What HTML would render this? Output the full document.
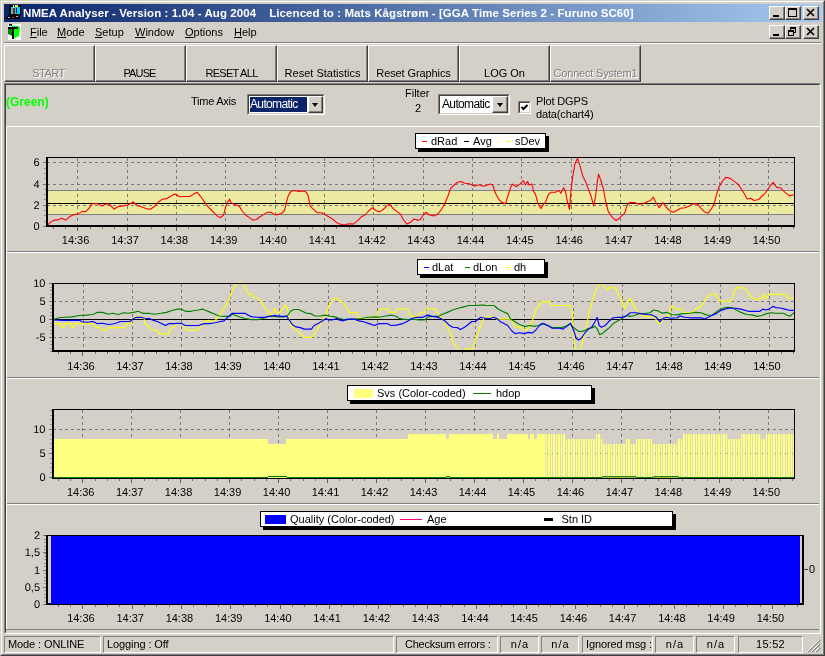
<!DOCTYPE html>
<html><head><meta charset="utf-8">
<style>
*{box-sizing:border-box;margin:0;padding:0}
html,body{width:825px;height:656px;overflow:hidden;background:#d4d0c8;will-change:transform;font-family:"Liberation Sans",sans-serif;font-size:11px;color:#000}
.a{position:absolute}
#win{position:absolute;left:0;top:0;width:825px;height:656px;background:#d4d0c8;border:1px solid;border-color:#d4d0c8 #404040 #404040 #d4d0c8}
#win2{position:absolute;left:1px;top:1px;width:823px;height:654px;border:1px solid;border-color:#fff #808080 #808080 #fff}
#title{position:absolute;left:4px;top:4px;width:818px;height:18px;background:linear-gradient(to right,#0a246a,#a6caf0);color:#fff;font-weight:bold;font-size:11.5px;line-height:18px;white-space:pre;letter-spacing:0.075px}
#title span{position:absolute;left:19px;top:0}
.cb{position:absolute;width:16px;height:14px;background:#d4d0c8;border:1px solid;border-color:#fff #404040 #404040 #fff;box-shadow:inset -1px -1px 0 #808080}
#menu{position:absolute;left:4px;top:22px;width:817px;height:20px;font-size:11px;line-height:20px}
#menu span{position:absolute;top:0}
.btn{position:absolute;top:45px;height:37px;width:91px;background:#d4d0c8;border:1px solid;border-color:#fff #404040 #404040 #fff;box-shadow:inset -1px -1px 0 #808080;text-align:center;font-size:11px;padding-top:21px;line-height:13px}
.dis{color:#808080;text-shadow:1px 1px 0 #fff}
.panel{position:absolute;left:4px;width:816px;border-top:1px solid #fff;border-bottom:1px solid #808080}
.lg{position:absolute;background:#fff;border:1px solid #000;box-shadow:3px 3px 0 #000;font-size:11px;line-height:13px;white-space:pre}
.lg span{position:absolute;top:0}
.tk{position:absolute;font-size:11px;line-height:12px}
.sb{position:absolute;top:636px;height:17px;border:1px solid;border-color:#808080 #fff #fff #808080;font-size:11px;line-height:15px;padding-left:3px;white-space:pre}
svg{position:absolute;left:0;top:0}
</style></head><body>
<div id="win"></div><div id="win2"></div>
<div id="title"><span>NMEA Analyser - Version : 1.04 - Aug 2004    Licenced to : Mats Kågstrøm - [GGA Time Series 2 - Furuno SC60]</span></div>
<div id="menu"><span style="left:26px"><u>F</u>ile</span><span style="left:53px"><u>M</u>ode</span><span style="left:91px"><u>S</u>etup</span><span style="left:131px"><u>W</u>indow</span><span style="left:181px"><u>O</u>ptions</span><span style="left:230px"><u>H</u>elp</span></div>
<svg width="40" height="45" viewBox="0 0 40 45" style="left:0;top:0">
<rect x="9" y="5" width="12" height="10" fill="#000"/><rect x="11" y="7" width="9" height="7" fill="#00e0e0"/><rect x="13" y="8" width="2" height="6" fill="#e00000"/><rect x="16" y="8" width="1" height="5" fill="#0000c0"/><rect x="15" y="5" width="3" height="2" fill="#ffff00"/><rect x="13" y="5" width="1" height="3" fill="#fff"/>
<path d="M9 15 L20 15 L20 19 L6 19 L6 18 Z" fill="#000"/><rect x="8" y="17" width="2" height="1" fill="#c0c0c0"/><rect x="12" y="17" width="2" height="1" fill="#ff0040"/><rect x="16" y="16" width="2" height="1" fill="#c0c0c0"/>
<rect x="8" y="24" width="13" height="16" fill="#fff"/><path d="M8 27 L12 27 L12 36 L8 34 Z" fill="#008000"/><path d="M12 26 L19 26 L20 28 L19 36 L15 38 L12 36 Z" fill="#00ff00"/><rect x="8" y="27" width="10" height="2" fill="#000"/><rect x="12" y="27" width="2" height="12" fill="#000"/><rect x="9" y="24" width="3" height="2" fill="#000"/><rect x="10" y="25" width="1" height="1" fill="#00ff00"/>
</svg>
<div class="cb" style="left:769px;top:6px"><svg width="14" height="12" viewBox="0 0 14 12" style="left:0;top:0"><rect x="3" y="8" width="6" height="2" fill="#000"/></svg></div><div class="cb" style="left:785px;top:6px"><svg width="14" height="12" viewBox="0 0 14 12" style="left:0;top:0"><rect x="2.5" y="1.5" width="8" height="8" fill="none" stroke="#000"/><rect x="2" y="1" width="9" height="2" fill="#000"/></svg></div><div class="cb" style="left:803px;top:6px"><svg width="14" height="12" viewBox="0 0 14 12" style="left:0;top:0"><path d="M3 2 L10 9 M10 2 L3 9" stroke="#000" stroke-width="1.6" fill="none"/></svg></div><div class="cb" style="left:769px;top:25px"><svg width="14" height="12" viewBox="0 0 14 12" style="left:0;top:0"><rect x="3" y="8" width="6" height="2" fill="#000"/></svg></div><div class="cb" style="left:785px;top:25px"><svg width="14" height="12" viewBox="0 0 14 12" style="left:0;top:0"><rect x="4.5" y="1.5" width="5" height="5" fill="none" stroke="#000"/><rect x="4" y="1" width="6" height="2" fill="#000"/><rect x="2.5" y="4.5" width="5" height="5" fill="#d4d0c8" stroke="#000"/><rect x="2" y="4" width="6" height="2" fill="#000"/></svg></div><div class="cb" style="left:803px;top:25px"><svg width="14" height="12" viewBox="0 0 14 12" style="left:0;top:0"><path d="M3 2 L10 9 M10 2 L3 9" stroke="#000" stroke-width="1.6" fill="none"/></svg></div>
<div class="a" style="left:4px;top:42px;width:817px;height:1px;background:#808080"></div><div class="a" style="left:4px;top:43px;width:817px;height:1px;background:#fff"></div>
<div class="btn dis" style="left:4px;letter-spacing:-0.55px;padding-right:2px">START</div>
<div class="btn" style="left:95px;letter-spacing:-0.85px;padding-right:2px">PAUSE</div>
<div class="btn" style="left:186px;letter-spacing:-0.7px">RESET ALL</div>
<div class="btn" style="left:277px">Reset Statistics</div>
<div class="btn" style="left:368px;letter-spacing:-0.1px">Reset Graphics</div>
<div class="btn" style="left:459px">LOG On</div>
<div class="btn dis" style="left:550px;letter-spacing:-0.2px">Connect System1</div>

<div class="a" style="left:4px;top:83px;width:817px;height:551px;border:1px solid;border-color:#808080 #fff #fff #808080"></div>
<div class="a" style="left:5px;top:84px;width:815px;height:549px;border:1px solid;border-color:#404040 #d4d0c8 #d4d0c8 #404040"></div>
<div class="a" style="left:6px;top:94.5px;color:#00ff00;font-weight:bold;font-size:12px">(Green)</div>
<div class="a" style="left:191px;top:95px;letter-spacing:-0.25px">Time Axis</div>
<div class="a" style="left:247px;top:94px;width:78px;height:21px;background:#fff;border:1px solid;border-color:#808080 #fff #fff #808080"><div class="a" style="left:0;top:0;width:76px;height:19px;border:1px solid;border-color:#404040 #d4d0c8 #d4d0c8 #404040"></div><div class="a" style="left:1px;top:1px;width:59px;height:17px;background:#0a246a;border:1px solid #fff;color:#fff;line-height:15px;padding-left:0px;font-size:12px;letter-spacing:-0.65px">Automatic</div><div class="cb" style="left:60px;top:1px;width:15px;height:17px"></div><div class="a" style="left:64px;top:8px;border:3.5px solid transparent;border-top:4px solid #000;border-bottom:0"></div></div>
<div class="a" style="left:405px;top:87px">Filter</div><div class="a" style="left:415px;top:102px">2</div>
<div class="a" style="left:438px;top:94px;width:72px;height:21px;background:#fff;border:1px solid;border-color:#808080 #fff #fff #808080"><div class="a" style="left:0;top:0;width:70px;height:19px;border:1px solid;border-color:#404040 #d4d0c8 #d4d0c8 #404040"></div><div class="a" style="left:2px;top:2px;line-height:15px;padding-left:1px;font-size:12px;letter-spacing:-0.65px">Automatic</div><div class="cb" style="left:53px;top:1px;width:16px;height:17px"></div><div class="a" style="left:57.5px;top:8px;border:3.5px solid transparent;border-top:4px solid #000;border-bottom:0"></div></div>
<div class="a" style="left:518px;top:101px;width:13px;height:13px;background:#fff;border:1px solid;border-color:#808080 #fff #fff #808080"><div class="a" style="left:0;top:0;width:11px;height:11px;border:1px solid;border-color:#404040 #d4d0c8 #d4d0c8 #404040"></div><svg width="11" height="11" style="left:0;top:0"><path d="M2.5 5 L4.5 7 L8.5 3" stroke="#000" stroke-width="2" fill="none"/></svg></div>
<div class="a" style="left:536px;top:95px;line-height:13px;letter-spacing:-0.15px">Plot DGPS<br>data(chart4)</div>

<div class="a" style="left:6px;top:126px;width:814px;height:1px;background:#fff"></div>
<div class="a" style="left:6px;top:251px;width:813px;height:1px;background:#808080"></div><div class="a" style="left:6px;top:252px;width:813px;height:1px;background:#fff"></div>
<div class="a" style="left:6px;top:377px;width:813px;height:1px;background:#808080"></div><div class="a" style="left:6px;top:378px;width:813px;height:1px;background:#fff"></div>
<div class="a" style="left:6px;top:503px;width:813px;height:1px;background:#808080"></div><div class="a" style="left:6px;top:504px;width:813px;height:1px;background:#fff"></div>
<div class="a" style="left:6px;top:629px;width:813px;height:1px;background:#808080"></div>
<div class="a" style="left:6px;top:127px;width:1px;height:502px;background:#fff"></div>
<svg width="825" height="656" viewBox="0 0 825 656" shape-rendering="crispEdges" font-family="Liberation Sans" font-size="11">
<rect x="47" y="190" width="747" height="24" fill="#ece9a0"/>
<line x1="77.7" y1="158" x2="77.7" y2="226" stroke="#7a7a7a" stroke-width="1" stroke-dasharray="3 3"/>
<line x1="127.1" y1="158" x2="127.1" y2="226" stroke="#7a7a7a" stroke-width="1" stroke-dasharray="3 3"/>
<line x1="176.4" y1="158" x2="176.4" y2="226" stroke="#7a7a7a" stroke-width="1" stroke-dasharray="3 3"/>
<line x1="225.8" y1="158" x2="225.8" y2="226" stroke="#7a7a7a" stroke-width="1" stroke-dasharray="3 3"/>
<line x1="275.1" y1="158" x2="275.1" y2="226" stroke="#7a7a7a" stroke-width="1" stroke-dasharray="3 3"/>
<line x1="324.5" y1="158" x2="324.5" y2="226" stroke="#7a7a7a" stroke-width="1" stroke-dasharray="3 3"/>
<line x1="373.9" y1="158" x2="373.9" y2="226" stroke="#7a7a7a" stroke-width="1" stroke-dasharray="3 3"/>
<line x1="423.2" y1="158" x2="423.2" y2="226" stroke="#7a7a7a" stroke-width="1" stroke-dasharray="3 3"/>
<line x1="472.6" y1="158" x2="472.6" y2="226" stroke="#7a7a7a" stroke-width="1" stroke-dasharray="3 3"/>
<line x1="521.9" y1="158" x2="521.9" y2="226" stroke="#7a7a7a" stroke-width="1" stroke-dasharray="3 3"/>
<line x1="571.3" y1="158" x2="571.3" y2="226" stroke="#7a7a7a" stroke-width="1" stroke-dasharray="3 3"/>
<line x1="620.7" y1="158" x2="620.7" y2="226" stroke="#7a7a7a" stroke-width="1" stroke-dasharray="3 3"/>
<line x1="670.0" y1="158" x2="670.0" y2="226" stroke="#7a7a7a" stroke-width="1" stroke-dasharray="3 3"/>
<line x1="719.4" y1="158" x2="719.4" y2="226" stroke="#7a7a7a" stroke-width="1" stroke-dasharray="3 3"/>
<line x1="768.7" y1="158" x2="768.7" y2="226" stroke="#7a7a7a" stroke-width="1" stroke-dasharray="3 3"/>
<line x1="47" y1="162.5" x2="794" y2="162.5" stroke="#7a7a7a" stroke-width="1" stroke-dasharray="3 3"/>
<line x1="47" y1="184.5" x2="794" y2="184.5" stroke="#7a7a7a" stroke-width="1" stroke-dasharray="3 3"/>
<line x1="47" y1="205.5" x2="794" y2="205.5" stroke="#7a7a7a" stroke-width="1" stroke-dasharray="3 3"/>
<rect x="47" y="190" width="747" height="1" fill="#808080"/><rect x="47" y="214" width="747" height="1" fill="#808080"/>
<rect x="47" y="203" width="747" height="1" fill="#000"/>
<path d="M47.7 225 L50.5 222.3 L54.1 220.1 L57.7 219.9 L61.4 218.3 L65.9 220.1 L69.5 216.8 L74.1 214.6 L77.7 214.1 L82.3 211.4 L85.9 211.7 L89.5 207.7 L91.9 203.7 L97.7 203.7 L102.3 205.9 L106.8 203.7 L109.5 204.5 L114.1 209.2 L117.7 206.8 L123.2 205.9 L127.7 205 L133.2 201.9 L136.8 205.5 L141.4 206.8 L145.9 208.6 L150.5 209.2 L154.1 206.8 L158.6 201.9 L162.3 199.2 L166.8 198.6 L170.5 196.5 L174.1 194.1 L176.8 194.6 L179.5 196.8 L185 196.5 L189.5 196.5 L190 196.5 L193.6 194.1 L197.3 192.3 L200.9 196.8 L204.5 201.9 L208.2 206.8 L211.8 210.5 L215.5 214.1 L218.2 216.8 L220.9 217.4 L223.6 215 L225.5 207.7 L227.3 202.3 L229.6 199.2 L230.9 202.6 L234.5 204.5 L239.1 205.9 L241.8 210.5 L245.5 215 L249.1 217.4 L252.7 220.1 L256.4 219.5 L260 216.8 L263.6 214.6 L267.3 212.3 L270.9 212.3 L274.5 214.6 L278.2 214.6 L281.8 213.2 L284.5 210.5 L286.4 202.3 L288.2 195.9 L290.9 191.4 L293.6 190.5 L299.1 191.4 L303.6 191 L306.4 192.3 L308.2 195.9 L310 205.9 L312.7 208.6 L317.3 212.8 L321.8 212.8 L325.5 215 L330 217.4 L334.5 220.5 L335 221.4 L338.6 223.7 L344.1 225 L348.6 223.7 L353.2 224.1 L356.8 221.4 L361.4 216.8 L365 215 L368.6 211 L372.3 207.7 L375.9 210.5 L379.5 211.9 L383.2 209.5 L386.8 205.9 L389.5 204.1 L393.2 208.6 L396.8 211.4 L400.5 214.1 L403.2 219.5 L406.8 224.1 L410.5 222.3 L414.1 219 L417.7 220.1 L420.5 219.5 L423.2 215 L425.9 212.3 L429.5 215 L434.1 215.9 L437.7 214.1 L441.4 209.5 L445 203.2 L447.7 196.8 L450.5 188.6 L454.1 185 L457.7 182.3 L460.5 181.4 L465 183.2 L469.5 183.7 L474.1 185.9 L478.6 185 L480 185 L483.6 186.3 L487.3 185 L490 184.1 L492.7 185 L495.5 193.2 L498.2 198.6 L501.8 202.3 L505.5 203.7 L508.2 195 L510.9 186.8 L512.7 184.1 L516.4 186.8 L520 184.1 L523.1 180.5 L525.5 185 L527.6 181.4 L529.1 185 L531.8 184.1 L533.6 191.4 L535.5 194.1 L537.8 203.2 L540.9 208.6 L543.6 204.1 L545.5 202.3 L548.2 195 L550.9 192.3 L555.5 192.3 L559.1 190.5 L560.9 193.2 L563.6 187.7 L565.5 191.4 L567.3 201.4 L569.5 209.5 L570.9 191.4 L572.7 176.8 L574.9 164.1 L577.6 158.3 L580 165.9 L582.7 175.9 L585.5 181.4 L588.2 188.6 L591.3 196.8 L593.6 205.9 L595.5 196.8 L597.3 182.3 L598.5 174.1 L600.9 180.5 L603.3 188.6 L605.5 200.5 L608.2 211.4 L611.8 216.8 L616 220.5 L620 217.7 L623.6 214.1 L625 212.3 L626.8 205.9 L629.5 202.6 L634.1 202.6 L638.6 204.1 L643.2 203.7 L647.7 201.4 L650.5 200.5 L653.2 197.2 L655.9 202.6 L659.2 207.7 L662.8 202.6 L665.9 206.8 L669.5 210.5 L673.2 212.3 L676.8 210.5 L680.5 208.3 L685 207.7 L689.5 205.9 L693.2 203.7 L697.7 204.1 L700.5 207.7 L705 212.3 L708.3 213.2 L711.4 208.6 L714.1 204.1 L715.9 196.8 L718.6 187.7 L722.3 181.4 L725.9 177.2 L730.5 178.6 L735 181.9 L738.6 185 L742.3 190.5 L745 195 L747.2 199 L750.5 198.3 L754.1 200.5 L758.6 199.5 L762.3 195.9 L765.9 192.3 L769.5 186.8 L773.2 182.3 L776.5 187.1 L781.1 188.3 L784.8 192.1 L789.4 195.9 L793.9 194.7" fill="none" stroke="#ff0000" stroke-width="1.1" shape-rendering="auto" stroke-linejoin="round"/>
<rect x="44" y="226" width="2" height="1" fill="#909090"/>
<rect x="44" y="221" width="2" height="1" fill="#909090"/>
<rect x="44" y="215" width="2" height="1" fill="#909090"/>
<rect x="44" y="210" width="2" height="1" fill="#909090"/>
<rect x="44" y="205" width="2" height="1" fill="#909090"/>
<rect x="44" y="199" width="2" height="1" fill="#909090"/>
<rect x="44" y="194" width="2" height="1" fill="#909090"/>
<rect x="44" y="189" width="2" height="1" fill="#909090"/>
<rect x="44" y="184" width="2" height="1" fill="#909090"/>
<rect x="44" y="178" width="2" height="1" fill="#909090"/>
<rect x="44" y="173" width="2" height="1" fill="#909090"/>
<rect x="44" y="168" width="2" height="1" fill="#909090"/>
<rect x="44" y="162" width="2" height="1" fill="#909090"/>
<rect x="46" y="158" width="2" height="69" fill="#000"/>
<rect x="46" y="225" width="749" height="2" fill="#000"/>
<rect x="46" y="157" width="749" height="1" fill="#000"/>
<rect x="794" y="158" width="1" height="69" fill="#000"/>
<rect x="77" y="227" width="1" height="4" fill="#606060"/>
<rect x="127" y="227" width="1" height="4" fill="#606060"/>
<rect x="176" y="227" width="1" height="4" fill="#606060"/>
<rect x="225" y="227" width="1" height="4" fill="#606060"/>
<rect x="275" y="227" width="1" height="4" fill="#606060"/>
<rect x="324" y="227" width="1" height="4" fill="#606060"/>
<rect x="373" y="227" width="1" height="4" fill="#606060"/>
<rect x="423" y="227" width="1" height="4" fill="#606060"/>
<rect x="472" y="227" width="1" height="4" fill="#606060"/>
<rect x="521" y="227" width="1" height="4" fill="#606060"/>
<rect x="571" y="227" width="1" height="4" fill="#606060"/>
<rect x="620" y="227" width="1" height="4" fill="#606060"/>
<rect x="670" y="227" width="1" height="4" fill="#606060"/>
<rect x="719" y="227" width="1" height="4" fill="#606060"/>
<rect x="768" y="227" width="1" height="4" fill="#606060"/>
<rect x="53" y="227" width="1" height="2" fill="#707070"/>
<rect x="65" y="227" width="1" height="2" fill="#707070"/>
<rect x="90" y="227" width="1" height="2" fill="#707070"/>
<rect x="102" y="227" width="1" height="2" fill="#707070"/>
<rect x="114" y="227" width="1" height="2" fill="#707070"/>
<rect x="139" y="227" width="1" height="2" fill="#707070"/>
<rect x="151" y="227" width="1" height="2" fill="#707070"/>
<rect x="164" y="227" width="1" height="2" fill="#707070"/>
<rect x="188" y="227" width="1" height="2" fill="#707070"/>
<rect x="201" y="227" width="1" height="2" fill="#707070"/>
<rect x="213" y="227" width="1" height="2" fill="#707070"/>
<rect x="238" y="227" width="1" height="2" fill="#707070"/>
<rect x="250" y="227" width="1" height="2" fill="#707070"/>
<rect x="262" y="227" width="1" height="2" fill="#707070"/>
<rect x="287" y="227" width="1" height="2" fill="#707070"/>
<rect x="299" y="227" width="1" height="2" fill="#707070"/>
<rect x="312" y="227" width="1" height="2" fill="#707070"/>
<rect x="336" y="227" width="1" height="2" fill="#707070"/>
<rect x="349" y="227" width="1" height="2" fill="#707070"/>
<rect x="361" y="227" width="1" height="2" fill="#707070"/>
<rect x="386" y="227" width="1" height="2" fill="#707070"/>
<rect x="398" y="227" width="1" height="2" fill="#707070"/>
<rect x="410" y="227" width="1" height="2" fill="#707070"/>
<rect x="435" y="227" width="1" height="2" fill="#707070"/>
<rect x="447" y="227" width="1" height="2" fill="#707070"/>
<rect x="460" y="227" width="1" height="2" fill="#707070"/>
<rect x="484" y="227" width="1" height="2" fill="#707070"/>
<rect x="497" y="227" width="1" height="2" fill="#707070"/>
<rect x="509" y="227" width="1" height="2" fill="#707070"/>
<rect x="534" y="227" width="1" height="2" fill="#707070"/>
<rect x="546" y="227" width="1" height="2" fill="#707070"/>
<rect x="558" y="227" width="1" height="2" fill="#707070"/>
<rect x="583" y="227" width="1" height="2" fill="#707070"/>
<rect x="595" y="227" width="1" height="2" fill="#707070"/>
<rect x="608" y="227" width="1" height="2" fill="#707070"/>
<rect x="632" y="227" width="1" height="2" fill="#707070"/>
<rect x="645" y="227" width="1" height="2" fill="#707070"/>
<rect x="657" y="227" width="1" height="2" fill="#707070"/>
<rect x="682" y="227" width="1" height="2" fill="#707070"/>
<rect x="694" y="227" width="1" height="2" fill="#707070"/>
<rect x="707" y="227" width="1" height="2" fill="#707070"/>
<rect x="731" y="227" width="1" height="2" fill="#707070"/>
<rect x="744" y="227" width="1" height="2" fill="#707070"/>
<rect x="756" y="227" width="1" height="2" fill="#707070"/>
<rect x="781" y="227" width="1" height="2" fill="#707070"/>
<rect x="793" y="227" width="1" height="2" fill="#707070"/>
<rect x="43" y="162" width="3" height="1" fill="#707070"/>
<rect x="43" y="184" width="3" height="1" fill="#707070"/>
<rect x="43" y="205" width="3" height="1" fill="#707070"/>
<rect x="43" y="226" width="3" height="1" fill="#707070"/>
<g shape-rendering="auto" text-rendering="geometricPrecision">
<text x="39.5" y="166" text-anchor="end">6</text>
<text x="39.5" y="188" text-anchor="end">4</text>
<text x="39.5" y="209" text-anchor="end">2</text>
<text x="39.5" y="230" text-anchor="end">0</text>
</g>
<g shape-rendering="auto">
<text x="75.6" y="244" text-anchor="middle">14:36</text>
<text x="125.0" y="244" text-anchor="middle">14:37</text>
<text x="174.3" y="244" text-anchor="middle">14:38</text>
<text x="223.7" y="244" text-anchor="middle">14:39</text>
<text x="273.0" y="244" text-anchor="middle">14:40</text>
<text x="322.4" y="244" text-anchor="middle">14:41</text>
<text x="371.8" y="244" text-anchor="middle">14:42</text>
<text x="421.1" y="244" text-anchor="middle">14:43</text>
<text x="470.5" y="244" text-anchor="middle">14:44</text>
<text x="519.8" y="244" text-anchor="middle">14:45</text>
<text x="569.2" y="244" text-anchor="middle">14:46</text>
<text x="618.6" y="244" text-anchor="middle">14:47</text>
<text x="667.9" y="244" text-anchor="middle">14:48</text>
<text x="717.3" y="244" text-anchor="middle">14:49</text>
<text x="766.6" y="244" text-anchor="middle">14:50</text>
</g>
<line x1="83.0" y1="284" x2="83.0" y2="351" stroke="#7a7a7a" stroke-width="1" stroke-dasharray="3 3"/>
<line x1="132.0" y1="284" x2="132.0" y2="351" stroke="#7a7a7a" stroke-width="1" stroke-dasharray="3 3"/>
<line x1="181.0" y1="284" x2="181.0" y2="351" stroke="#7a7a7a" stroke-width="1" stroke-dasharray="3 3"/>
<line x1="230.0" y1="284" x2="230.0" y2="351" stroke="#7a7a7a" stroke-width="1" stroke-dasharray="3 3"/>
<line x1="279.0" y1="284" x2="279.0" y2="351" stroke="#7a7a7a" stroke-width="1" stroke-dasharray="3 3"/>
<line x1="328.0" y1="284" x2="328.0" y2="351" stroke="#7a7a7a" stroke-width="1" stroke-dasharray="3 3"/>
<line x1="377.0" y1="284" x2="377.0" y2="351" stroke="#7a7a7a" stroke-width="1" stroke-dasharray="3 3"/>
<line x1="426.0" y1="284" x2="426.0" y2="351" stroke="#7a7a7a" stroke-width="1" stroke-dasharray="3 3"/>
<line x1="475.0" y1="284" x2="475.0" y2="351" stroke="#7a7a7a" stroke-width="1" stroke-dasharray="3 3"/>
<line x1="524.0" y1="284" x2="524.0" y2="351" stroke="#7a7a7a" stroke-width="1" stroke-dasharray="3 3"/>
<line x1="573.0" y1="284" x2="573.0" y2="351" stroke="#7a7a7a" stroke-width="1" stroke-dasharray="3 3"/>
<line x1="622.0" y1="284" x2="622.0" y2="351" stroke="#7a7a7a" stroke-width="1" stroke-dasharray="3 3"/>
<line x1="671.0" y1="284" x2="671.0" y2="351" stroke="#7a7a7a" stroke-width="1" stroke-dasharray="3 3"/>
<line x1="720.0" y1="284" x2="720.0" y2="351" stroke="#7a7a7a" stroke-width="1" stroke-dasharray="3 3"/>
<line x1="769.0" y1="284" x2="769.0" y2="351" stroke="#7a7a7a" stroke-width="1" stroke-dasharray="3 3"/>
<line x1="53" y1="301.5" x2="794" y2="301.5" stroke="#7a7a7a" stroke-width="1" stroke-dasharray="3 3"/>
<line x1="53" y1="337.5" x2="794" y2="337.5" stroke="#7a7a7a" stroke-width="1" stroke-dasharray="3 3"/>
<rect x="53" y="319" width="741" height="1" fill="#000"/>
<path d="M53.6 320 L54.5 323.6 L60.9 323.6 L61.8 327.3 L63.6 327.3 L64.5 323.6 L70.9 323.6 L71.8 327.3 L73.6 327.3 L74.5 323.6 L93.6 323.6 L95.5 326.9 L99.1 327.6 L100.9 330 L107.3 330 L108.2 327.6 L124.5 327.6 L126.4 323.6 L130.9 323.6 L132.7 318.5 L135.5 316.9 L140 316.9 L144.2 318.5 L144.7 323.6 L147.3 325.1 L149.1 327.6 L151.8 330 L157.3 330.5 L159.1 333.6 L168.2 334.2 L170 330 L171.8 327.6 L174.5 326.9 L175.5 323.6 L181.8 323.6 L183.6 326.9 L186.4 330 L194.5 330 L195 330.5 L197.7 330 L200.5 326.9 L204.1 321.8 L208.6 320.4 L212.3 322.7 L215 320.4 L218.6 317.3 L221.4 311.8 L225 306.9 L228.6 300 L232.3 290.9 L235.9 284.5 L239.5 282.7 L243.2 283.3 L245.9 288.2 L248.6 294.2 L252.3 294.2 L254.1 297.8 L258.6 298.2 L261.4 302.7 L265 307.3 L267.7 311.3 L270.5 315.5 L272.3 312.7 L275 308.2 L276.8 312.7 L279.5 312.7 L282.3 309.1 L285.5 305.1 L287.7 310 L289.5 320.4 L291.4 326.4 L294.1 327.6 L297.7 330.9 L300.5 334.2 L305 337.3 L311.4 337.3 L314.1 334.2 L316.8 330 L320.5 323.6 L324.1 317.3 L326.8 311.8 L329.5 305.5 L332.3 300 L335 298.2 L338.6 298.7 L340 300.9 L342.7 301.8 L344.5 305.5 L347.3 308.2 L349.1 312.4 L356.4 312.7 L358.2 316.4 L360.9 318.5 L364.5 318.5 L369.1 316.9 L376.4 316.4 L378.2 312.4 L380.9 308.7 L388.2 308.7 L390 312.4 L395.5 312.4 L397.3 308.7 L407.3 308.7 L409.1 312.4 L411.8 316.4 L418.2 316.4 L420 312.7 L424.5 312.4 L426.4 308.7 L435.5 308.7 L437.3 312.7 L440 316.4 L443.6 320.4 L446.4 325.5 L449.1 330.9 L450.9 334.5 L452.7 341.8 L455.5 345.1 L459.1 350 L463.6 350.9 L465.5 348.7 L472.7 348.7 L474.5 341.8 L477.3 334.5 L480 327.3 L482.7 320.9 L484.9 317.3 L486.8 316.9 L494.1 316.9 L496.8 319.1 L510.5 319.1 L512.3 321.8 L515 326.9 L521.4 327.3 L524.1 330 L526.8 330 L530.5 325.5 L533.2 318.2 L535.9 309.1 L538.6 307.3 L540.5 301.8 L549.5 301.5 L551.4 305.5 L570.5 305.5 L572.3 312.7 L573.2 325.5 L574.1 340 L575.9 350 L579.2 350.9 L581.4 345.5 L584.1 334.5 L586.8 323.6 L589.5 310.9 L592.3 301.8 L595 292.7 L597.7 286.4 L600.5 283.6 L603.2 284 L606.8 290 L609.5 287.6 L615 287.6 L617.7 292.7 L620.5 298.2 L623.2 305.5 L625 308.2 L627.7 301.8 L629.5 298.2 L630 299.1 L632.7 303.6 L635.5 308.2 L638.2 312.7 L640.9 315.5 L645.5 316.4 L653.6 316.4 L656.4 320 L658.2 323.6 L660.9 322.7 L662.7 319.1 L665.5 316.4 L668.2 316.4 L670 309.1 L672.2 305.5 L674.5 308.7 L680.9 308.7 L683.6 312.7 L692.7 312.7 L695.5 309.1 L700 307.3 L702.7 303.6 L705.5 300 L708.2 296 L710.9 294.2 L716.4 294.2 L719.1 300.9 L730.9 301.5 L732.7 296.4 L734.5 290.9 L737.3 287.6 L743.6 287.6 L746.4 290 L749.1 294.2 L751.8 297.8 L754.5 298.2 L756.9 300.4 L759.1 298.2 L761.8 298.2 L763.6 294.2 L765.5 298.2 L767.3 298.2 L768.2 294.2 L774.5 294.2 L786.4 294.4 L787.9 298.2 L793.9 298.2" fill="none" stroke="#ffff00" stroke-width="1.15" shape-rendering="auto" stroke-linejoin="round"/>
<path d="M53.6 319.6 L59.1 317.8 L64.5 317.3 L71.8 316.9 L79.1 315.5 L86.4 315.1 L92.7 314.5 L97.3 312.4 L102.7 312.4 L108.2 314.2 L112.7 313.3 L118.2 314.5 L123.6 312.7 L128.2 313.3 L133.6 312.4 L138.2 311.3 L142.7 313.3 L148.2 313.3 L154.5 314.2 L160.9 313.3 L166.4 312.4 L171.8 310.5 L177.3 309.1 L180.9 309.1 L185.5 311.3 L190.9 311.3 L194.5 310.5 L195 310.5 L198.6 310 L202.3 309.1 L205.9 310.5 L210.5 312.4 L215 314.2 L219.5 316 L224.1 316.4 L228.6 316.4 L232.3 314.2 L235.9 315.5 L240.5 317.3 L245 318.5 L251.4 319.6 L257.7 319.6 L263.2 318.5 L267.7 316.4 L273.2 316.4 L278.6 316.9 L284.1 316.9 L287.7 315.5 L290.5 311.3 L294.1 309.5 L298.6 309.5 L302.3 311.3 L305.9 313.1 L310.5 313.6 L315 316 L320.5 316 L325 315.1 L329.5 316 L335 316.9 L339.5 318.5 L340 318.5 L345.5 320 L350.9 319.1 L356.4 319.1 L361.8 318.5 L367.3 317.3 L374.5 316.9 L380 317.3 L385.5 316 L390.9 315.1 L395.5 316 L399.1 318.2 L402.7 319.1 L408.2 319.6 L413.6 319.1 L418.2 320 L424.5 320 L428.2 316.9 L432.7 316.4 L438.2 316.4 L441.8 314.5 L447.3 312.4 L452.7 310 L458.2 308.2 L463.6 306.9 L469.1 305.5 L475.5 305.5 L481.8 305.1 L484.5 305.1 L485 305.5 L494.1 305.5 L497.7 308.7 L502.3 311.3 L507.7 313.6 L510.5 319.1 L515 321.8 L519.5 324.5 L525 326.4 L530.5 325.5 L534.1 326.4 L538.6 325.5 L542.3 323.3 L546.8 325.1 L552.3 327.6 L561.4 327.6 L565.9 326.4 L570.5 323.3 L572.3 326.4 L575.9 329.5 L579.5 331.8 L584.1 330.9 L587.7 328.7 L592.3 327.6 L595 326.4 L597.4 329.1 L599.5 334.5 L602.3 333.6 L605.9 330.5 L609.5 327.6 L613.2 323.6 L617.7 320.9 L622.3 318.2 L626.8 315.5 L629.5 316.4 L630 316.4 L634.5 315.5 L639.1 313.6 L644.5 313.6 L650 312.7 L653.6 310 L658.2 310.9 L661.8 313.1 L667.3 312.4 L671.8 314.5 L677.3 314.9 L682.7 313.6 L690 313.3 L695.5 312.4 L700.9 312.7 L706.4 314.9 L711.8 315.5 L715.5 312.7 L719.1 310 L722.7 308.2 L727.3 307.3 L731.8 307.6 L736.4 310 L740.9 312.4 L746.4 314.5 L751.8 314.9 L757.3 316.4 L761.8 315.5 L766.4 313.6 L770.9 312.7 L774.5 313.1 L783.3 313.3 L787.1 315.2 L790.2 316.1 L793.9 312.6" fill="none" stroke="#008000" stroke-width="1.15" shape-rendering="auto" stroke-linejoin="round"/>
<path d="M53.6 320 L63.6 320.4 L71.8 320.4 L80 320.4 L81.8 321.8 L87.3 322.2 L92.7 321.5 L97.3 323.6 L102.7 323.3 L108.2 324.5 L112.7 324 L117.3 322.7 L120 321.5 L130 321.5 L133.6 318.5 L136.4 317.3 L140.9 317.3 L144.5 318.2 L149.1 318.5 L153.6 320.4 L157.3 321.5 L160.9 323.3 L165.5 325.5 L169.1 323.6 L174.5 323.6 L177.3 323.3 L180.9 323.3 L185.5 325.5 L191.8 325.5 L194.5 325.5 L195 325.5 L198.6 325.5 L204.1 323.6 L209.5 323.6 L215 322.7 L220.5 321.5 L224.1 320.9 L228.6 316.4 L232.3 313.3 L235.9 313.3 L245 313.3 L248.6 315.5 L252.3 316.9 L257.7 317.3 L264.1 317.3 L269.5 316.4 L275 315.5 L280.5 316.4 L286.8 316.4 L289.5 320.4 L292.3 324.5 L295.9 326.9 L300.5 327.6 L304.1 329.1 L311.4 329.1 L314.1 325.5 L318.6 323.3 L322.3 320.9 L325.9 318.5 L328.6 320 L332.3 320 L336.8 318.5 L339.5 320.4 L340 320 L342.7 320.9 L347.3 319.1 L354.5 319.1 L359.1 320.9 L363.6 321.8 L369.1 323.6 L374.5 325.5 L379.1 323.6 L387.3 323.6 L390.9 325.5 L396.4 325.1 L402.7 323.6 L407.3 321.5 L411.8 318.5 L416.4 317.3 L422.7 317.3 L425.5 316 L428.2 315.1 L431.8 316.4 L436.4 316.9 L440.9 318.5 L445.5 321.5 L449.1 325.1 L452.7 327.3 L457.3 327.6 L460.4 329.5 L464.5 327.3 L468.2 324.5 L471.8 321.5 L475.5 321.5 L478.2 319.1 L480.9 317.3 L484.5 318.2 L485 318.2 L489.5 318.5 L494.1 317.3 L497.7 319.1 L500.5 321.8 L504.1 323.6 L507.7 325.5 L511.4 330.5 L515 333.6 L519.5 332.7 L524.1 333.6 L528.6 332.4 L532.3 333.1 L535.9 330 L539.5 325.5 L543.2 323.6 L547.7 325.5 L552.3 328.2 L559.5 328.2 L563.2 329.1 L565.9 326.9 L570.5 323.6 L572.3 327.3 L574.5 332.7 L575.9 338.2 L578.6 340 L581.4 338.2 L585 332.7 L588.6 329.1 L592.3 326.4 L595 321.8 L597.2 317.3 L599.2 325.5 L601.4 327.3 L605 325.5 L608.6 321.8 L613.2 317.8 L617.7 317.3 L623.2 317.3 L626.8 315.5 L629.5 313.3 L630 312.7 L635.5 312.7 L640.9 313.6 L646.4 314.5 L651.8 314.9 L656.4 317.3 L660 321.8 L662.7 318.5 L666.4 317.3 L670.9 318.2 L677.3 317.8 L680 316 L684.5 317.3 L690 317.8 L701.8 317.8 L704.5 319.1 L708.2 317.3 L712.7 314.9 L716.4 313.6 L720 310.9 L724.5 309.1 L729.1 308.2 L735.5 308.2 L740.9 309.1 L748.2 311.3 L755.5 311.3 L760 311.3 L762.7 309.1 L765.5 310 L769.1 309.1 L772.7 306.4 L774.5 306.9 L775.8 307.6 L780.3 308 L784.8 309.1 L789.4 310.3 L793.9 310.3" fill="none" stroke="#0000ff" stroke-width="1.15" shape-rendering="auto" stroke-linejoin="round"/>
<rect x="50" y="351" width="2" height="1" fill="#909090"/>
<rect x="50" y="348" width="2" height="1" fill="#909090"/>
<rect x="50" y="344" width="2" height="1" fill="#909090"/>
<rect x="50" y="341" width="2" height="1" fill="#909090"/>
<rect x="50" y="337" width="2" height="1" fill="#909090"/>
<rect x="50" y="333" width="2" height="1" fill="#909090"/>
<rect x="50" y="330" width="2" height="1" fill="#909090"/>
<rect x="50" y="326" width="2" height="1" fill="#909090"/>
<rect x="50" y="323" width="2" height="1" fill="#909090"/>
<rect x="50" y="319" width="2" height="1" fill="#909090"/>
<rect x="50" y="315" width="2" height="1" fill="#909090"/>
<rect x="50" y="312" width="2" height="1" fill="#909090"/>
<rect x="50" y="308" width="2" height="1" fill="#909090"/>
<rect x="50" y="305" width="2" height="1" fill="#909090"/>
<rect x="50" y="301" width="2" height="1" fill="#909090"/>
<rect x="50" y="297" width="2" height="1" fill="#909090"/>
<rect x="50" y="294" width="2" height="1" fill="#909090"/>
<rect x="50" y="290" width="2" height="1" fill="#909090"/>
<rect x="50" y="287" width="2" height="1" fill="#909090"/>
<rect x="52" y="284" width="2" height="68" fill="#000"/>
<rect x="52" y="350" width="743" height="2" fill="#000"/>
<rect x="52" y="283" width="743" height="1" fill="#000"/>
<rect x="794" y="284" width="1" height="68" fill="#000"/>
<rect x="82" y="352" width="1" height="4" fill="#606060"/>
<rect x="132" y="352" width="1" height="4" fill="#606060"/>
<rect x="180" y="352" width="1" height="4" fill="#606060"/>
<rect x="230" y="352" width="1" height="4" fill="#606060"/>
<rect x="278" y="352" width="1" height="4" fill="#606060"/>
<rect x="328" y="352" width="1" height="4" fill="#606060"/>
<rect x="376" y="352" width="1" height="4" fill="#606060"/>
<rect x="426" y="352" width="1" height="4" fill="#606060"/>
<rect x="474" y="352" width="1" height="4" fill="#606060"/>
<rect x="524" y="352" width="1" height="4" fill="#606060"/>
<rect x="572" y="352" width="1" height="4" fill="#606060"/>
<rect x="622" y="352" width="1" height="4" fill="#606060"/>
<rect x="670" y="352" width="1" height="4" fill="#606060"/>
<rect x="720" y="352" width="1" height="4" fill="#606060"/>
<rect x="768" y="352" width="1" height="4" fill="#606060"/>
<rect x="58" y="352" width="1" height="2" fill="#707070"/>
<rect x="70" y="352" width="1" height="2" fill="#707070"/>
<rect x="95" y="352" width="1" height="2" fill="#707070"/>
<rect x="107" y="352" width="1" height="2" fill="#707070"/>
<rect x="119" y="352" width="1" height="2" fill="#707070"/>
<rect x="144" y="352" width="1" height="2" fill="#707070"/>
<rect x="156" y="352" width="1" height="2" fill="#707070"/>
<rect x="168" y="352" width="1" height="2" fill="#707070"/>
<rect x="193" y="352" width="1" height="2" fill="#707070"/>
<rect x="205" y="352" width="1" height="2" fill="#707070"/>
<rect x="217" y="352" width="1" height="2" fill="#707070"/>
<rect x="242" y="352" width="1" height="2" fill="#707070"/>
<rect x="254" y="352" width="1" height="2" fill="#707070"/>
<rect x="266" y="352" width="1" height="2" fill="#707070"/>
<rect x="291" y="352" width="1" height="2" fill="#707070"/>
<rect x="303" y="352" width="1" height="2" fill="#707070"/>
<rect x="315" y="352" width="1" height="2" fill="#707070"/>
<rect x="340" y="352" width="1" height="2" fill="#707070"/>
<rect x="352" y="352" width="1" height="2" fill="#707070"/>
<rect x="364" y="352" width="1" height="2" fill="#707070"/>
<rect x="389" y="352" width="1" height="2" fill="#707070"/>
<rect x="401" y="352" width="1" height="2" fill="#707070"/>
<rect x="413" y="352" width="1" height="2" fill="#707070"/>
<rect x="438" y="352" width="1" height="2" fill="#707070"/>
<rect x="450" y="352" width="1" height="2" fill="#707070"/>
<rect x="462" y="352" width="1" height="2" fill="#707070"/>
<rect x="487" y="352" width="1" height="2" fill="#707070"/>
<rect x="499" y="352" width="1" height="2" fill="#707070"/>
<rect x="511" y="352" width="1" height="2" fill="#707070"/>
<rect x="536" y="352" width="1" height="2" fill="#707070"/>
<rect x="548" y="352" width="1" height="2" fill="#707070"/>
<rect x="560" y="352" width="1" height="2" fill="#707070"/>
<rect x="585" y="352" width="1" height="2" fill="#707070"/>
<rect x="597" y="352" width="1" height="2" fill="#707070"/>
<rect x="609" y="352" width="1" height="2" fill="#707070"/>
<rect x="634" y="352" width="1" height="2" fill="#707070"/>
<rect x="646" y="352" width="1" height="2" fill="#707070"/>
<rect x="658" y="352" width="1" height="2" fill="#707070"/>
<rect x="683" y="352" width="1" height="2" fill="#707070"/>
<rect x="695" y="352" width="1" height="2" fill="#707070"/>
<rect x="707" y="352" width="1" height="2" fill="#707070"/>
<rect x="732" y="352" width="1" height="2" fill="#707070"/>
<rect x="744" y="352" width="1" height="2" fill="#707070"/>
<rect x="756" y="352" width="1" height="2" fill="#707070"/>
<rect x="781" y="352" width="1" height="2" fill="#707070"/>
<rect x="793" y="352" width="1" height="2" fill="#707070"/>
<rect x="49" y="283" width="3" height="1" fill="#707070"/>
<rect x="49" y="301" width="3" height="1" fill="#707070"/>
<rect x="49" y="319" width="3" height="1" fill="#707070"/>
<rect x="49" y="337" width="3" height="1" fill="#707070"/>
<g shape-rendering="auto" text-rendering="geometricPrecision">
<text x="45.5" y="287" text-anchor="end">10</text>
<text x="45.5" y="305" text-anchor="end">5</text>
<text x="45.5" y="323" text-anchor="end">0</text>
<text x="45.5" y="341" text-anchor="end">-5</text>
</g>
<g shape-rendering="auto">
<text x="80.9" y="370" text-anchor="middle">14:36</text>
<text x="129.9" y="370" text-anchor="middle">14:37</text>
<text x="178.9" y="370" text-anchor="middle">14:38</text>
<text x="227.9" y="370" text-anchor="middle">14:39</text>
<text x="276.9" y="370" text-anchor="middle">14:40</text>
<text x="325.9" y="370" text-anchor="middle">14:41</text>
<text x="374.9" y="370" text-anchor="middle">14:42</text>
<text x="423.9" y="370" text-anchor="middle">14:43</text>
<text x="472.9" y="370" text-anchor="middle">14:44</text>
<text x="521.9" y="370" text-anchor="middle">14:45</text>
<text x="570.9" y="370" text-anchor="middle">14:46</text>
<text x="619.9" y="370" text-anchor="middle">14:47</text>
<text x="668.9" y="370" text-anchor="middle">14:48</text>
<text x="717.9" y="370" text-anchor="middle">14:49</text>
<text x="766.9" y="370" text-anchor="middle">14:50</text>
</g>
<line x1="82.8" y1="410" x2="82.8" y2="439" stroke="#7a7a7a" stroke-width="1" stroke-dasharray="3 3"/>
<line x1="131.8" y1="410" x2="131.8" y2="439" stroke="#7a7a7a" stroke-width="1" stroke-dasharray="3 3"/>
<line x1="180.7" y1="410" x2="180.7" y2="439" stroke="#7a7a7a" stroke-width="1" stroke-dasharray="3 3"/>
<line x1="229.7" y1="410" x2="229.7" y2="439" stroke="#7a7a7a" stroke-width="1" stroke-dasharray="3 3"/>
<line x1="278.7" y1="410" x2="278.7" y2="444" stroke="#7a7a7a" stroke-width="1" stroke-dasharray="3 3"/>
<line x1="327.6" y1="410" x2="327.6" y2="439" stroke="#7a7a7a" stroke-width="1" stroke-dasharray="3 3"/>
<line x1="376.6" y1="410" x2="376.6" y2="439" stroke="#7a7a7a" stroke-width="1" stroke-dasharray="3 3"/>
<line x1="425.6" y1="410" x2="425.6" y2="434" stroke="#7a7a7a" stroke-width="1" stroke-dasharray="3 3"/>
<line x1="474.6" y1="410" x2="474.6" y2="434" stroke="#7a7a7a" stroke-width="1" stroke-dasharray="3 3"/>
<line x1="523.5" y1="410" x2="523.5" y2="434" stroke="#7a7a7a" stroke-width="1" stroke-dasharray="3 3"/>
<line x1="572.5" y1="410" x2="572.5" y2="439" stroke="#7a7a7a" stroke-width="1" stroke-dasharray="3 3"/>
<line x1="621.5" y1="410" x2="621.5" y2="444" stroke="#7a7a7a" stroke-width="1" stroke-dasharray="3 3"/>
<line x1="670.4" y1="410" x2="670.4" y2="444" stroke="#7a7a7a" stroke-width="1" stroke-dasharray="3 3"/>
<line x1="719.4" y1="410" x2="719.4" y2="434" stroke="#7a7a7a" stroke-width="1" stroke-dasharray="3 3"/>
<line x1="768.4" y1="410" x2="768.4" y2="434" stroke="#7a7a7a" stroke-width="1" stroke-dasharray="3 3"/>
<line x1="53" y1="429.5" x2="794" y2="429.5" stroke="#7a7a7a" stroke-width="1" stroke-dasharray="3 3"/>
<line x1="53" y1="453.5" x2="794" y2="453.5" stroke="#7a7a7a" stroke-width="1" stroke-dasharray="3 3"/>
<rect x="54" y="439" width="214" height="39" fill="#ffff80" shape-rendering="auto"/>
<rect x="268" y="444" width="18" height="34" fill="#ffff80" shape-rendering="auto"/>
<rect x="286" y="439" width="122" height="39" fill="#ffff80" shape-rendering="auto"/>
<rect x="408" y="434" width="38" height="44" fill="#ffff80" shape-rendering="auto"/>
<rect x="446" y="439" width="3" height="39" fill="#ffff80" shape-rendering="auto"/>
<rect x="449" y="434" width="44" height="44" fill="#ffff80" shape-rendering="auto"/>
<rect x="493" y="439" width="4" height="39" fill="#ffff80" shape-rendering="auto"/>
<rect x="497" y="434" width="2" height="44" fill="#ffff80" shape-rendering="auto"/>
<rect x="499" y="439" width="8" height="39" fill="#ffff80" shape-rendering="auto"/>
<rect x="507" y="434" width="21" height="44" fill="#ffff80" shape-rendering="auto"/>
<rect x="528" y="439" width="2" height="39" fill="#ffff80" shape-rendering="auto"/>
<rect x="530" y="434" width="4" height="44" fill="#ffff80" shape-rendering="auto"/>
<rect x="534" y="439" width="3" height="39" fill="#ffff80" shape-rendering="auto"/>
<rect x="537" y="434" width="8.5" height="44" fill="#ffff80" shape-rendering="auto"/>
<rect x="545.5" y="434" width="20.200000000000045" height="44" fill="#ffff80" opacity="0.22" shape-rendering="auto"/>
<rect x="565.7" y="439" width="30.699999999999932" height="39" fill="#ffff80" opacity="0.22" shape-rendering="auto"/>
<rect x="596.4" y="434" width="4.100000000000023" height="44" fill="#ffff80" opacity="0.22" shape-rendering="auto"/>
<rect x="600.5" y="439" width="3.5" height="39" fill="#ffff80" opacity="0.22" shape-rendering="auto"/>
<rect x="604" y="444" width="21.5" height="34" fill="#ffff80" opacity="0.22" shape-rendering="auto"/>
<rect x="625.5" y="439" width="4.0" height="39" fill="#ffff80" opacity="0.22" shape-rendering="auto"/>
<rect x="629.5" y="444" width="6.5" height="34" fill="#ffff80" opacity="0.22" shape-rendering="auto"/>
<rect x="636" y="439" width="17" height="39" fill="#ffff80" opacity="0.22" shape-rendering="auto"/>
<rect x="653" y="444" width="24" height="34" fill="#ffff80" opacity="0.22" shape-rendering="auto"/>
<rect x="677" y="439" width="6" height="39" fill="#ffff80" opacity="0.22" shape-rendering="auto"/>
<rect x="683" y="434" width="45" height="44" fill="#ffff80" opacity="0.22" shape-rendering="auto"/>
<rect x="728" y="439" width="13.399999999999977" height="39" fill="#ffff80" opacity="0.22" shape-rendering="auto"/>
<rect x="741.4" y="434" width="19.600000000000023" height="44" fill="#ffff80" opacity="0.22" shape-rendering="auto"/>
<rect x="761" y="439" width="4" height="39" fill="#ffff80" opacity="0.22" shape-rendering="auto"/>
<rect x="765" y="434" width="29" height="44" fill="#ffff80" opacity="0.22" shape-rendering="auto"/>
<path d="M546 434H547V478H546ZM548 434H550V478H548ZM551 434H552V478H551ZM553 434H555V478H553ZM556 434H557V478H556ZM558 434H560V478H558ZM561 434H562V478H561ZM563 434H565V478H563ZM566 439H567V478H566ZM568 439H570V478H568ZM571 439H572V478H571ZM573 439H575V478H573ZM576 439H577V478H576ZM578 439H580V478H578ZM581 439H582V478H581ZM583 439H585V478H583ZM586 439H587V478H586ZM588 439H590V478H588ZM591 439H592V478H591ZM593 439H595V478H593ZM596 434H597V478H596ZM598 434H600V478H598ZM601 439H602V478H601ZM603 444H605V478H603ZM606 444H607V478H606ZM608 444H610V478H608ZM611 444H612V478H611ZM613 444H615V478H613ZM616 444H617V478H616ZM618 444H620V478H618ZM621 444H622V478H621ZM623 444H625V478H623ZM626 439H627V478H626ZM628 439H630V478H628ZM631 444H632V478H631ZM633 444H635V478H633ZM636 439H637V478H636ZM638 439H640V478H638ZM641 439H642V478H641ZM643 439H645V478H643ZM646 439H647V478H646ZM648 439H650V478H648ZM651 439H652V478H651ZM653 444H655V478H653ZM656 444H657V478H656ZM658 444H660V478H658ZM661 444H662V478H661ZM663 444H665V478H663ZM666 444H667V478H666ZM668 444H670V478H668ZM671 444H672V478H671ZM673 444H675V478H673ZM676 444H677V478H676ZM678 439H680V478H678ZM681 439H682V478H681ZM683 434H685V478H683ZM686 434H687V478H686ZM688 434H690V478H688ZM691 434H692V478H691ZM693 434H695V478H693ZM696 434H697V478H696ZM698 434H700V478H698ZM701 434H702V478H701ZM703 434H705V478H703ZM706 434H707V478H706ZM708 434H710V478H708ZM711 434H712V478H711ZM713 434H715V478H713ZM716 434H717V478H716ZM718 434H720V478H718ZM721 434H722V478H721ZM723 434H725V478H723ZM726 434H727V478H726ZM728 439H730V478H728ZM731 439H732V478H731ZM733 439H735V478H733ZM736 439H737V478H736ZM738 439H740V478H738ZM741 434H742V478H741ZM743 434H745V478H743ZM746 434H747V478H746ZM748 434H750V478H748ZM751 434H752V478H751ZM753 434H755V478H753ZM756 434H757V478H756ZM758 434H760V478H758ZM761 439H762V478H761ZM763 439H765V478H763ZM766 434H767V478H766ZM768 434H770V478H768ZM771 434H772V478H771ZM773 434H775V478H773ZM776 434H777V478H776ZM778 434H780V478H778ZM781 434H782V478H781ZM783 434H785V478H783ZM786 434H787V478H786ZM788 434H790V478H788ZM791 434H792V478H791ZM793 434H794V478H793Z" fill="#ffff80"/>
<rect x="50" y="477" width="2" height="1" fill="#909090"/>
<rect x="50" y="472" width="2" height="1" fill="#909090"/>
<rect x="50" y="467" width="2" height="1" fill="#909090"/>
<rect x="50" y="463" width="2" height="1" fill="#909090"/>
<rect x="50" y="458" width="2" height="1" fill="#909090"/>
<rect x="50" y="453" width="2" height="1" fill="#909090"/>
<rect x="50" y="448" width="2" height="1" fill="#909090"/>
<rect x="50" y="443" width="2" height="1" fill="#909090"/>
<rect x="50" y="439" width="2" height="1" fill="#909090"/>
<rect x="50" y="434" width="2" height="1" fill="#909090"/>
<rect x="50" y="429" width="2" height="1" fill="#909090"/>
<rect x="50" y="424" width="2" height="1" fill="#909090"/>
<rect x="50" y="419" width="2" height="1" fill="#909090"/>
<rect x="50" y="415" width="2" height="1" fill="#909090"/>
<rect x="50" y="410" width="2" height="1" fill="#909090"/>
<rect x="52" y="410" width="2" height="69" fill="#000"/>
<rect x="52" y="477" width="743" height="2" fill="#000"/>
<rect x="52" y="409" width="743" height="1" fill="#000"/>
<rect x="794" y="410" width="1" height="69" fill="#000"/>
<rect x="82" y="479" width="1" height="4" fill="#606060"/>
<rect x="131" y="479" width="1" height="4" fill="#606060"/>
<rect x="180" y="479" width="1" height="4" fill="#606060"/>
<rect x="229" y="479" width="1" height="4" fill="#606060"/>
<rect x="278" y="479" width="1" height="4" fill="#606060"/>
<rect x="327" y="479" width="1" height="4" fill="#606060"/>
<rect x="376" y="479" width="1" height="4" fill="#606060"/>
<rect x="425" y="479" width="1" height="4" fill="#606060"/>
<rect x="474" y="479" width="1" height="4" fill="#606060"/>
<rect x="523" y="479" width="1" height="4" fill="#606060"/>
<rect x="572" y="479" width="1" height="4" fill="#606060"/>
<rect x="621" y="479" width="1" height="4" fill="#606060"/>
<rect x="670" y="479" width="1" height="4" fill="#606060"/>
<rect x="719" y="479" width="1" height="4" fill="#606060"/>
<rect x="768" y="479" width="1" height="4" fill="#606060"/>
<rect x="58" y="479" width="1" height="2" fill="#707070"/>
<rect x="70" y="479" width="1" height="2" fill="#707070"/>
<rect x="95" y="479" width="1" height="2" fill="#707070"/>
<rect x="107" y="479" width="1" height="2" fill="#707070"/>
<rect x="119" y="479" width="1" height="2" fill="#707070"/>
<rect x="144" y="479" width="1" height="2" fill="#707070"/>
<rect x="156" y="479" width="1" height="2" fill="#707070"/>
<rect x="168" y="479" width="1" height="2" fill="#707070"/>
<rect x="192" y="479" width="1" height="2" fill="#707070"/>
<rect x="205" y="479" width="1" height="2" fill="#707070"/>
<rect x="217" y="479" width="1" height="2" fill="#707070"/>
<rect x="241" y="479" width="1" height="2" fill="#707070"/>
<rect x="254" y="479" width="1" height="2" fill="#707070"/>
<rect x="266" y="479" width="1" height="2" fill="#707070"/>
<rect x="290" y="479" width="1" height="2" fill="#707070"/>
<rect x="303" y="479" width="1" height="2" fill="#707070"/>
<rect x="315" y="479" width="1" height="2" fill="#707070"/>
<rect x="339" y="479" width="1" height="2" fill="#707070"/>
<rect x="352" y="479" width="1" height="2" fill="#707070"/>
<rect x="364" y="479" width="1" height="2" fill="#707070"/>
<rect x="388" y="479" width="1" height="2" fill="#707070"/>
<rect x="401" y="479" width="1" height="2" fill="#707070"/>
<rect x="413" y="479" width="1" height="2" fill="#707070"/>
<rect x="437" y="479" width="1" height="2" fill="#707070"/>
<rect x="450" y="479" width="1" height="2" fill="#707070"/>
<rect x="462" y="479" width="1" height="2" fill="#707070"/>
<rect x="486" y="479" width="1" height="2" fill="#707070"/>
<rect x="499" y="479" width="1" height="2" fill="#707070"/>
<rect x="511" y="479" width="1" height="2" fill="#707070"/>
<rect x="535" y="479" width="1" height="2" fill="#707070"/>
<rect x="548" y="479" width="1" height="2" fill="#707070"/>
<rect x="560" y="479" width="1" height="2" fill="#707070"/>
<rect x="584" y="479" width="1" height="2" fill="#707070"/>
<rect x="596" y="479" width="1" height="2" fill="#707070"/>
<rect x="609" y="479" width="1" height="2" fill="#707070"/>
<rect x="633" y="479" width="1" height="2" fill="#707070"/>
<rect x="645" y="479" width="1" height="2" fill="#707070"/>
<rect x="658" y="479" width="1" height="2" fill="#707070"/>
<rect x="682" y="479" width="1" height="2" fill="#707070"/>
<rect x="694" y="479" width="1" height="2" fill="#707070"/>
<rect x="707" y="479" width="1" height="2" fill="#707070"/>
<rect x="731" y="479" width="1" height="2" fill="#707070"/>
<rect x="743" y="479" width="1" height="2" fill="#707070"/>
<rect x="756" y="479" width="1" height="2" fill="#707070"/>
<rect x="780" y="479" width="1" height="2" fill="#707070"/>
<rect x="792" y="479" width="1" height="2" fill="#707070"/>
<rect x="49" y="429" width="3" height="1" fill="#707070"/>
<rect x="49" y="453" width="3" height="1" fill="#707070"/>
<rect x="49" y="477" width="3" height="1" fill="#707070"/>
<g shape-rendering="auto" text-rendering="geometricPrecision">
<text x="45.5" y="433" text-anchor="end">10</text>
<text x="45.5" y="457" text-anchor="end">5</text>
<text x="45.5" y="481" text-anchor="end">0</text>
</g>
<rect x="54" y="477" width="740" height="1" fill="#008000"/>
<rect x="268" y="477" width="19" height="1" fill="#ffff80"/><rect x="268" y="476" width="19" height="1" fill="#008000"/>
<rect x="446" y="477" width="4" height="1" fill="#a0c040"/><rect x="446" y="476" width="4" height="1" fill="#208020"/>
<rect x="602" y="477" width="34" height="1" fill="#a0c040"/><rect x="602" y="476" width="34" height="1" fill="#208020"/>
<rect x="653" y="477" width="26" height="1" fill="#a0c040"/><rect x="653" y="476" width="26" height="1" fill="#208020"/>
<g shape-rendering="auto">
<text x="80.7" y="496" text-anchor="middle">14:36</text>
<text x="129.7" y="496" text-anchor="middle">14:37</text>
<text x="178.6" y="496" text-anchor="middle">14:38</text>
<text x="227.6" y="496" text-anchor="middle">14:39</text>
<text x="276.6" y="496" text-anchor="middle">14:40</text>
<text x="325.5" y="496" text-anchor="middle">14:41</text>
<text x="374.5" y="496" text-anchor="middle">14:42</text>
<text x="423.5" y="496" text-anchor="middle">14:43</text>
<text x="472.5" y="496" text-anchor="middle">14:44</text>
<text x="521.4" y="496" text-anchor="middle">14:45</text>
<text x="570.4" y="496" text-anchor="middle">14:46</text>
<text x="619.4" y="496" text-anchor="middle">14:47</text>
<text x="668.3" y="496" text-anchor="middle">14:48</text>
<text x="717.3" y="496" text-anchor="middle">14:49</text>
<text x="766.3" y="496" text-anchor="middle">14:50</text>
</g>
<rect x="44" y="604" width="2" height="1" fill="#909090"/>
<rect x="44" y="601" width="2" height="1" fill="#909090"/>
<rect x="44" y="597" width="2" height="1" fill="#909090"/>
<rect x="44" y="594" width="2" height="1" fill="#909090"/>
<rect x="44" y="590" width="2" height="1" fill="#909090"/>
<rect x="44" y="587" width="2" height="1" fill="#909090"/>
<rect x="44" y="583" width="2" height="1" fill="#909090"/>
<rect x="44" y="580" width="2" height="1" fill="#909090"/>
<rect x="44" y="577" width="2" height="1" fill="#909090"/>
<rect x="44" y="573" width="2" height="1" fill="#909090"/>
<rect x="44" y="570" width="2" height="1" fill="#909090"/>
<rect x="44" y="566" width="2" height="1" fill="#909090"/>
<rect x="44" y="563" width="2" height="1" fill="#909090"/>
<rect x="44" y="559" width="2" height="1" fill="#909090"/>
<rect x="44" y="556" width="2" height="1" fill="#909090"/>
<rect x="44" y="553" width="2" height="1" fill="#909090"/>
<rect x="44" y="549" width="2" height="1" fill="#909090"/>
<rect x="44" y="546" width="2" height="1" fill="#909090"/>
<rect x="44" y="542" width="2" height="1" fill="#909090"/>
<rect x="44" y="539" width="2" height="1" fill="#909090"/>
<rect x="46" y="536" width="2" height="69" fill="#000"/>
<rect x="46" y="603" width="758" height="2" fill="#000"/>
<rect x="46" y="535" width="758" height="1" fill="#000"/>
<rect x="802" y="536" width="2" height="69" fill="#000"/>
<rect x="82" y="605" width="1" height="4" fill="#606060"/>
<rect x="132" y="605" width="1" height="4" fill="#606060"/>
<rect x="181" y="605" width="1" height="4" fill="#606060"/>
<rect x="230" y="605" width="1" height="4" fill="#606060"/>
<rect x="280" y="605" width="1" height="4" fill="#606060"/>
<rect x="329" y="605" width="1" height="4" fill="#606060"/>
<rect x="378" y="605" width="1" height="4" fill="#606060"/>
<rect x="427" y="605" width="1" height="4" fill="#606060"/>
<rect x="476" y="605" width="1" height="4" fill="#606060"/>
<rect x="526" y="605" width="1" height="4" fill="#606060"/>
<rect x="575" y="605" width="1" height="4" fill="#606060"/>
<rect x="624" y="605" width="1" height="4" fill="#606060"/>
<rect x="674" y="605" width="1" height="4" fill="#606060"/>
<rect x="723" y="605" width="1" height="4" fill="#606060"/>
<rect x="772" y="605" width="1" height="4" fill="#606060"/>
<rect x="58" y="605" width="1" height="2" fill="#707070"/>
<rect x="70" y="605" width="1" height="2" fill="#707070"/>
<rect x="95" y="605" width="1" height="2" fill="#707070"/>
<rect x="107" y="605" width="1" height="2" fill="#707070"/>
<rect x="119" y="605" width="1" height="2" fill="#707070"/>
<rect x="144" y="605" width="1" height="2" fill="#707070"/>
<rect x="156" y="605" width="1" height="2" fill="#707070"/>
<rect x="169" y="605" width="1" height="2" fill="#707070"/>
<rect x="193" y="605" width="1" height="2" fill="#707070"/>
<rect x="206" y="605" width="1" height="2" fill="#707070"/>
<rect x="218" y="605" width="1" height="2" fill="#707070"/>
<rect x="243" y="605" width="1" height="2" fill="#707070"/>
<rect x="255" y="605" width="1" height="2" fill="#707070"/>
<rect x="267" y="605" width="1" height="2" fill="#707070"/>
<rect x="292" y="605" width="1" height="2" fill="#707070"/>
<rect x="304" y="605" width="1" height="2" fill="#707070"/>
<rect x="316" y="605" width="1" height="2" fill="#707070"/>
<rect x="341" y="605" width="1" height="2" fill="#707070"/>
<rect x="353" y="605" width="1" height="2" fill="#707070"/>
<rect x="366" y="605" width="1" height="2" fill="#707070"/>
<rect x="390" y="605" width="1" height="2" fill="#707070"/>
<rect x="403" y="605" width="1" height="2" fill="#707070"/>
<rect x="415" y="605" width="1" height="2" fill="#707070"/>
<rect x="440" y="605" width="1" height="2" fill="#707070"/>
<rect x="452" y="605" width="1" height="2" fill="#707070"/>
<rect x="464" y="605" width="1" height="2" fill="#707070"/>
<rect x="489" y="605" width="1" height="2" fill="#707070"/>
<rect x="501" y="605" width="1" height="2" fill="#707070"/>
<rect x="513" y="605" width="1" height="2" fill="#707070"/>
<rect x="538" y="605" width="1" height="2" fill="#707070"/>
<rect x="550" y="605" width="1" height="2" fill="#707070"/>
<rect x="563" y="605" width="1" height="2" fill="#707070"/>
<rect x="587" y="605" width="1" height="2" fill="#707070"/>
<rect x="600" y="605" width="1" height="2" fill="#707070"/>
<rect x="612" y="605" width="1" height="2" fill="#707070"/>
<rect x="637" y="605" width="1" height="2" fill="#707070"/>
<rect x="649" y="605" width="1" height="2" fill="#707070"/>
<rect x="661" y="605" width="1" height="2" fill="#707070"/>
<rect x="686" y="605" width="1" height="2" fill="#707070"/>
<rect x="698" y="605" width="1" height="2" fill="#707070"/>
<rect x="710" y="605" width="1" height="2" fill="#707070"/>
<rect x="735" y="605" width="1" height="2" fill="#707070"/>
<rect x="747" y="605" width="1" height="2" fill="#707070"/>
<rect x="760" y="605" width="1" height="2" fill="#707070"/>
<rect x="784" y="605" width="1" height="2" fill="#707070"/>
<rect x="797" y="605" width="1" height="2" fill="#707070"/>
<rect x="43" y="535" width="3" height="1" fill="#707070"/>
<rect x="43" y="552" width="3" height="1" fill="#707070"/>
<rect x="43" y="570" width="3" height="1" fill="#707070"/>
<rect x="43" y="587" width="3" height="1" fill="#707070"/>
<rect x="43" y="604" width="3" height="1" fill="#707070"/>
<g shape-rendering="auto" text-rendering="geometricPrecision">
<text x="40" y="539" text-anchor="end">2</text>
<text x="40" y="556" text-anchor="end">1,5</text>
<text x="40" y="574" text-anchor="end">1</text>
<text x="40" y="591" text-anchor="end">0,5</text>
<text x="40" y="608" text-anchor="end">0</text>
</g>
<rect x="51" y="536" width="749" height="68" fill="#0000ff"/>
<rect x="804" y="569" width="4" height="1" fill="#404040"/>
<text x="809" y="573" shape-rendering="auto">0</text>
<g shape-rendering="auto">
<text x="80.9" y="622" text-anchor="middle">14:36</text>
<text x="130.2" y="622" text-anchor="middle">14:37</text>
<text x="179.4" y="622" text-anchor="middle">14:38</text>
<text x="228.7" y="622" text-anchor="middle">14:39</text>
<text x="277.9" y="622" text-anchor="middle">14:40</text>
<text x="327.1" y="622" text-anchor="middle">14:41</text>
<text x="376.4" y="622" text-anchor="middle">14:42</text>
<text x="425.6" y="622" text-anchor="middle">14:43</text>
<text x="474.9" y="622" text-anchor="middle">14:44</text>
<text x="524.1" y="622" text-anchor="middle">14:45</text>
<text x="573.4" y="622" text-anchor="middle">14:46</text>
<text x="622.6" y="622" text-anchor="middle">14:47</text>
<text x="671.9" y="622" text-anchor="middle">14:48</text>
<text x="721.1" y="622" text-anchor="middle">14:49</text>
<text x="770.4" y="622" text-anchor="middle">14:50</text>
</g>
</svg>
<div class="lg" style="left:415px;top:133px;width:131px;height:16px"><span style="left:6px;top:7px;width:5px;height:1px;background:#f00"></span><span style="left:15px;top:1px">dRad</span><span style="left:48px;top:7px;width:5px;height:1px;background:#000"></span><span style="left:57px;top:1px">Avg</span><span style="left:90px;top:7px;width:5px;height:1px;background:#ff0"></span><span style="left:99px;top:1px">sDev</span></div>
<div class="lg" style="left:417px;top:259px;width:128px;height:16px"><span style="left:6px;top:7px;width:5px;height:1px;background:#00f"></span><span style="left:14px;top:1px">dLat</span><span style="left:47px;top:7px;width:5px;height:1px;background:#008000"></span><span style="left:55px;top:1px">dLon</span><span style="left:88px;top:7px;width:5px;height:1px;background:#ff0"></span><span style="left:96px;top:1px">dh</span></div>
<div class="lg" style="left:347px;top:385px;width:245px;height:16px"><span style="left:6px;top:3px;width:19px;height:9px;background:#ffff80"></span><span style="left:29px;top:1px">Svs (Color-coded)</span><span style="left:125px;top:7px;width:18px;height:1px;background:#008000"></span><span style="left:148px;top:1px">hdop</span></div>
<div class="lg" style="left:260px;top:511px;width:413px;height:16px"><span style="left:4px;top:3px;width:21px;height:9px;background:#00f"></span><span style="left:29px;top:1px">Quality (Color-coded)</span><span style="left:139px;top:7px;width:22px;height:1px;background:#ff0080"></span><span style="left:166px;top:1px">Age</span><span style="left:282.5px;top:6px;width:9px;height:3px;background:#000"></span><span style="left:300.5px;top:1px">Stn ID</span></div>
<div class="sb" style="left:4px;width:97px;padding-left:3px;letter-spacing:-0.1px">Mode : ONLINE</div>
<div class="sb" style="left:103px;width:291px;padding-left:3px;letter-spacing:-0.1px">Logging : Off</div>
<div class="sb" style="left:396px;width:102px;padding-left:8px;letter-spacing:-0.25px">Checksum errors :</div>
<div class="sb" style="left:500px;width:39px;text-align:center;padding:0;letter-spacing:1px;text-indent:1px">n/a</div>
<div class="sb" style="left:541px;width:38px;text-align:center;padding:0;letter-spacing:1px;text-indent:1px">n/a</div>
<div class="sb" style="left:582px;width:71px;padding-left:3px;letter-spacing:-0.1px">Ignored msg :</div>
<div class="sb" style="left:655px;width:39px;text-align:center;padding:0;letter-spacing:1px;text-indent:1px">n/a</div>
<div class="sb" style="left:696px;width:39px;text-align:center;padding:0;letter-spacing:1px;text-indent:1px">n/a</div>
<div class="sb" style="left:738px;width:65px;text-align:center;padding:0;letter-spacing:0.25px">15:52</div>
<svg width="14" height="14" viewBox="0 0 14 14" style="left:807px;top:639px"><path d="M13 1 L1 13 M13 5 L5 13 M13 9 L9 13" stroke="#808080" stroke-width="1.4"/><path d="M12 1 L0 13 M12 5 L4 13 M12 9 L8 13" stroke="#fff" stroke-width="1"/></svg>
</body></html>
